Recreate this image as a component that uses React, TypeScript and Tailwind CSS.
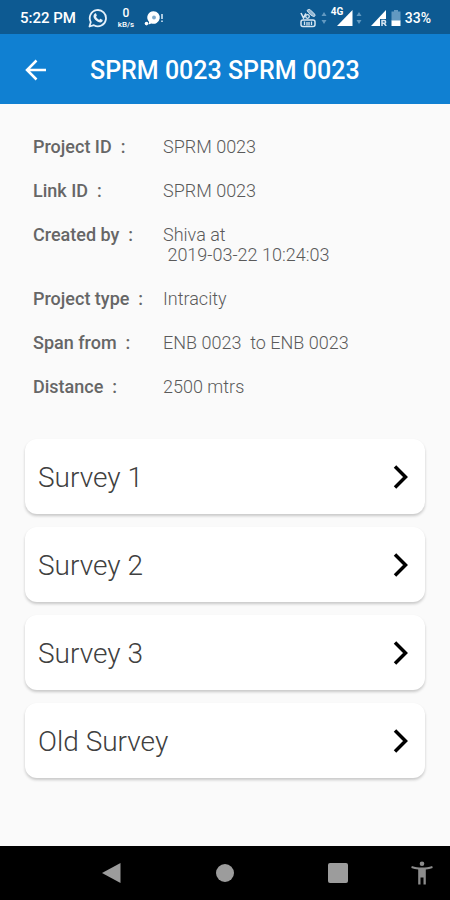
import React from "react";

const details = [
  { label: "Project ID", value: "SPRM 0023" },
  { label: "Link ID", value: "SPRM 0023" },
  { label: "Created by", value: "Shiva at\n 2019-03-22 10:24:03" },
  { label: "Project type", value: "Intracity" },
  { label: "Span from", value: "ENB 0023  to ENB 0023" },
  { label: "Distance", value: "2500 mtrs" },
];

const surveys = ["Survey 1", "Survey 2", "Survey 3", "Old Survey"];

function WhatsAppIcon() {
  return (
    <svg className="h-5 w-5" viewBox="0 0 20 20" fill="none" aria-hidden="true">
      <path d="M1.5 18.5l1.3-4.4a8.1 8.1 0 1 1 3.1 3.1z" stroke="#e6f1fa" strokeWidth="1.8" strokeLinejoin="round" />
      <path
        d="M6.9 5.4c.4-.3.9-.2 1.1.2l.8 1.7c.1.3 0 .6-.8 1.5.8 1.5 1.7 2.4 3.3 3.1.8-1.1 1-1.2 1.4-1l1.7.9c.5.3.3 1.2-.1 1.7-1.1 1.2-2.7 1.1-4.5.2C7.7 12.6 6.2 11 5.6 9.2c-.4-1.4.2-3 1.3-3.8z"
        fill="#e6f1fa"
      />
    </svg>
  );
}

function BubbleIcon() {
  return (
    <svg className="h-5 w-5" viewBox="0 0 20 20" aria-hidden="true">
      <path d="M9.5 3.2a6.3 6.3 0 1 1-2.2 12.2L4.5 16.5l.6-2.6A6.3 6.3 0 0 1 9.5 3.2z" fill="#fff" />
      <circle cx="10" cy="9.5" r="1.9" fill="#7eaacb" />
      <circle cx="2.5" cy="15.6" r="1.8" fill="#fff" />
      <path d="M18 6v5M18 12.6v1.4" stroke="#a9c8df" strokeWidth="2" />
    </svg>
  );
}

function VolteIcon() {
  return (
    <svg className="h-5 w-[18px]" viewBox="0 0 18 20" fill="none" stroke="#d7e6f2" aria-hidden="true">
      <path d="M2 5l2.5 5L7 5.5" strokeWidth="1.6" />
      <circle cx="8.5" cy="8.5" r="1.8" strokeWidth="1.3" />
      <path d="M8 2.5c1.5-1.5 3-1.5 4 0l3.5 3.5c1 1.3.5 2.5-.6 2.5-2.4-.5-5-3-6.900-6z" fill="#8fb5d2" strokeWidth="1" />
      <rect x="2" y="12" width="14" height="6.5" rx="2" strokeWidth="1.5" />
      <path d="M5.5 13.5v3.5M8 14v3.5M10 14v3.5M12.5 13.5v3.5" strokeWidth="1.3" />
    </svg>
  );
}

function DataArrows() {
  return (
    <svg className="h-4 w-[6px]" viewBox="0 0 6 16" fill="#6299c1" aria-hidden="true">
      <path d="M3 2l2.5 4h-5zM3 14l2.5-4h-5z" />
    </svg>
  );
}

function SignalIcon() {
  return (
    <svg className="h-4 w-4" viewBox="0 0 16 16" fill="#fff" aria-hidden="true">
      <path d="M15.5 0v16H0z" />
    </svg>
  );
}

function RoamingSignalIcon() {
  return (
    <svg className="h-4 w-4" viewBox="0 0 16 16" aria-hidden="true">
      <path d="M15 0v9H9v7H0z" fill="#fff" />
      <path d="M11 16v-5.5h2.2a1.3 1.3 0 0 1 0 2.800H11M13 13.3l2.2 2.700" fill="none" stroke="#d7e6f2" strokeWidth="1.5" />
    </svg>
  );
}

function BatteryIcon() {
  return (
    <svg className="h-4 w-[10px]" viewBox="0 0 10 16" aria-hidden="true">
      <path d="M3 0h4v1.5h2.5V11H.5V1.5H3z" fill="#6299c1" />
      <path d="M.5 10.5h9V16h-9z" fill="#fff" />
    </svg>
  );
}

function StatusBar() {
  return (
    <div className="flex h-[34px] items-center justify-between bg-[#0d5a92] pr-[19px] pl-5 pt-px text-white">
      <div className="flex items-center">
        <span className="text-[15px] font-medium leading-5">5:22 PM</span>
        <div className="ml-3 flex items-center gap-2">
          <WhatsAppIcon />
          <div className="flex w-5 flex-col items-center font-medium">
            <span className="text-[12px] leading-[14px]">0</span>
            <span className="text-[8px] leading-[10px]">kB/s</span>
          </div>
          <BubbleIcon />
        </div>
      </div>
      <div className="flex items-center">
        <VolteIcon />
        <div className="ml-1 flex items-center">
          <DataArrows />
          <span className="relative ml-[10px]">
            <SignalIcon />
            <span className="absolute -top-1 -left-[6px] text-[10px] font-bold leading-3">4G</span>
          </span>
          <span className="ml-[3px]">
            <DataArrows />
          </span>
        </div>
        <div className="ml-[9px] flex items-center gap-1">
          <RoamingSignalIcon />
          <BatteryIcon />
          <span className="text-[14px] font-medium leading-5">33%</span>
        </div>
      </div>
    </div>
  );
}

function Header() {
  return (
    <header className="flex h-[70px] items-center bg-[#1080d2] pt-px pl-5 text-white">
      <button type="button" aria-label="Back" className="flex h-8 w-8 items-center justify-center">
        <svg className="h-6 w-6" viewBox="0 0 24 24" fill="none" stroke="#fff" strokeWidth="2.5" aria-hidden="true">
          <path d="M22 12H3.5M12.5 2.5L3 12l9.5 9.5" />
        </svg>
      </button>
      <h1 className="ml-[38px] pt-0.5 text-[25px] font-medium leading-8">SPRM 0023 SPRM 0023</h1>
    </header>
  );
}

function NavigationBar() {
  return (
    <nav className="flex h-[54px] items-center bg-black">
      <div className="w-14" />
      <button type="button" aria-label="Back" className="flex h-full flex-1 items-center justify-center">
        <svg className="h-5 w-5" viewBox="0 0 20 20" fill="#9c9c9c" aria-hidden="true">
          <path d="M0 10L18.5 0v20z" />
        </svg>
      </button>
      <button type="button" aria-label="Home" className="flex h-full flex-1 items-center justify-center">
        <span className="h-[18px] w-[18px] rounded-full bg-[#9c9c9c]" />
      </button>
      <button type="button" aria-label="Recent apps" className="flex h-full flex-1 items-center justify-center">
        <span className="h-5 w-5 rounded-xs bg-[#9c9c9c]" />
      </button>
      <button type="button" aria-label="Accessibility" className="flex h-full w-14 items-center justify-center">
        <svg className="h-6 w-[22px]" viewBox="0 0 22 24" fill="#8c8c8c" aria-hidden="true">
          <circle cx="11" cy="2.8" r="2.3" />
          <path d="M.8 5c6.5 2 13.9 2 20.4 0l.5 2c-2.2.8-4.5 1.2-6.900 1.500V23.500h-2.300v-7H9.500v7H7.200v-15C4.800 8.200 2.500 7.800.3 7z" />
        </svg>
      </button>
    </nav>
  );
}

export default function App() {
  return (
    <div className="flex min-h-screen flex-col bg-[#fafafa] font-['Roboto',sans-serif]">
      <StatusBar />
      <Header />
      <main className="flex-1 px-[25px] pt-[33px] pb-8">
        <dl className="flex flex-col gap-6 px-2 text-[18px] leading-5">
          {details.map((item) => (
            <div key={item.label} className="flex">
              <dt className="w-[130px] shrink-0 whitespace-pre font-medium text-[#666666]">{item.label + "  :"}</dt>
              <dd className="whitespace-pre-wrap font-light text-[#5a5a5a]">{item.value}</dd>
            </div>
          ))}
        </dl>
        <div className="mt-[42px] flex flex-col gap-[13px]">
          {surveys.map((name) => (
            <button
              key={name}
              type="button"
              className="flex h-[75px] w-full items-center justify-between rounded-xl bg-white pr-4 pl-[13px] text-left shadow-[0_2px_3px_rgba(0,0,0,0.2)]"
            >
              <span className="pt-0.5 text-[28px] font-light leading-8 text-[#404040]">{name}</span>
              <svg className="h-6 w-4" viewBox="0 0 16 24" fill="none" stroke="#000" strokeWidth="3.5" aria-hidden="true">
                <path d="M2 1.5L12.5 12 2 22.5" />
              </svg>
            </button>
          ))}
        </div>
      </main>
      <NavigationBar />
    </div>
  );
}
